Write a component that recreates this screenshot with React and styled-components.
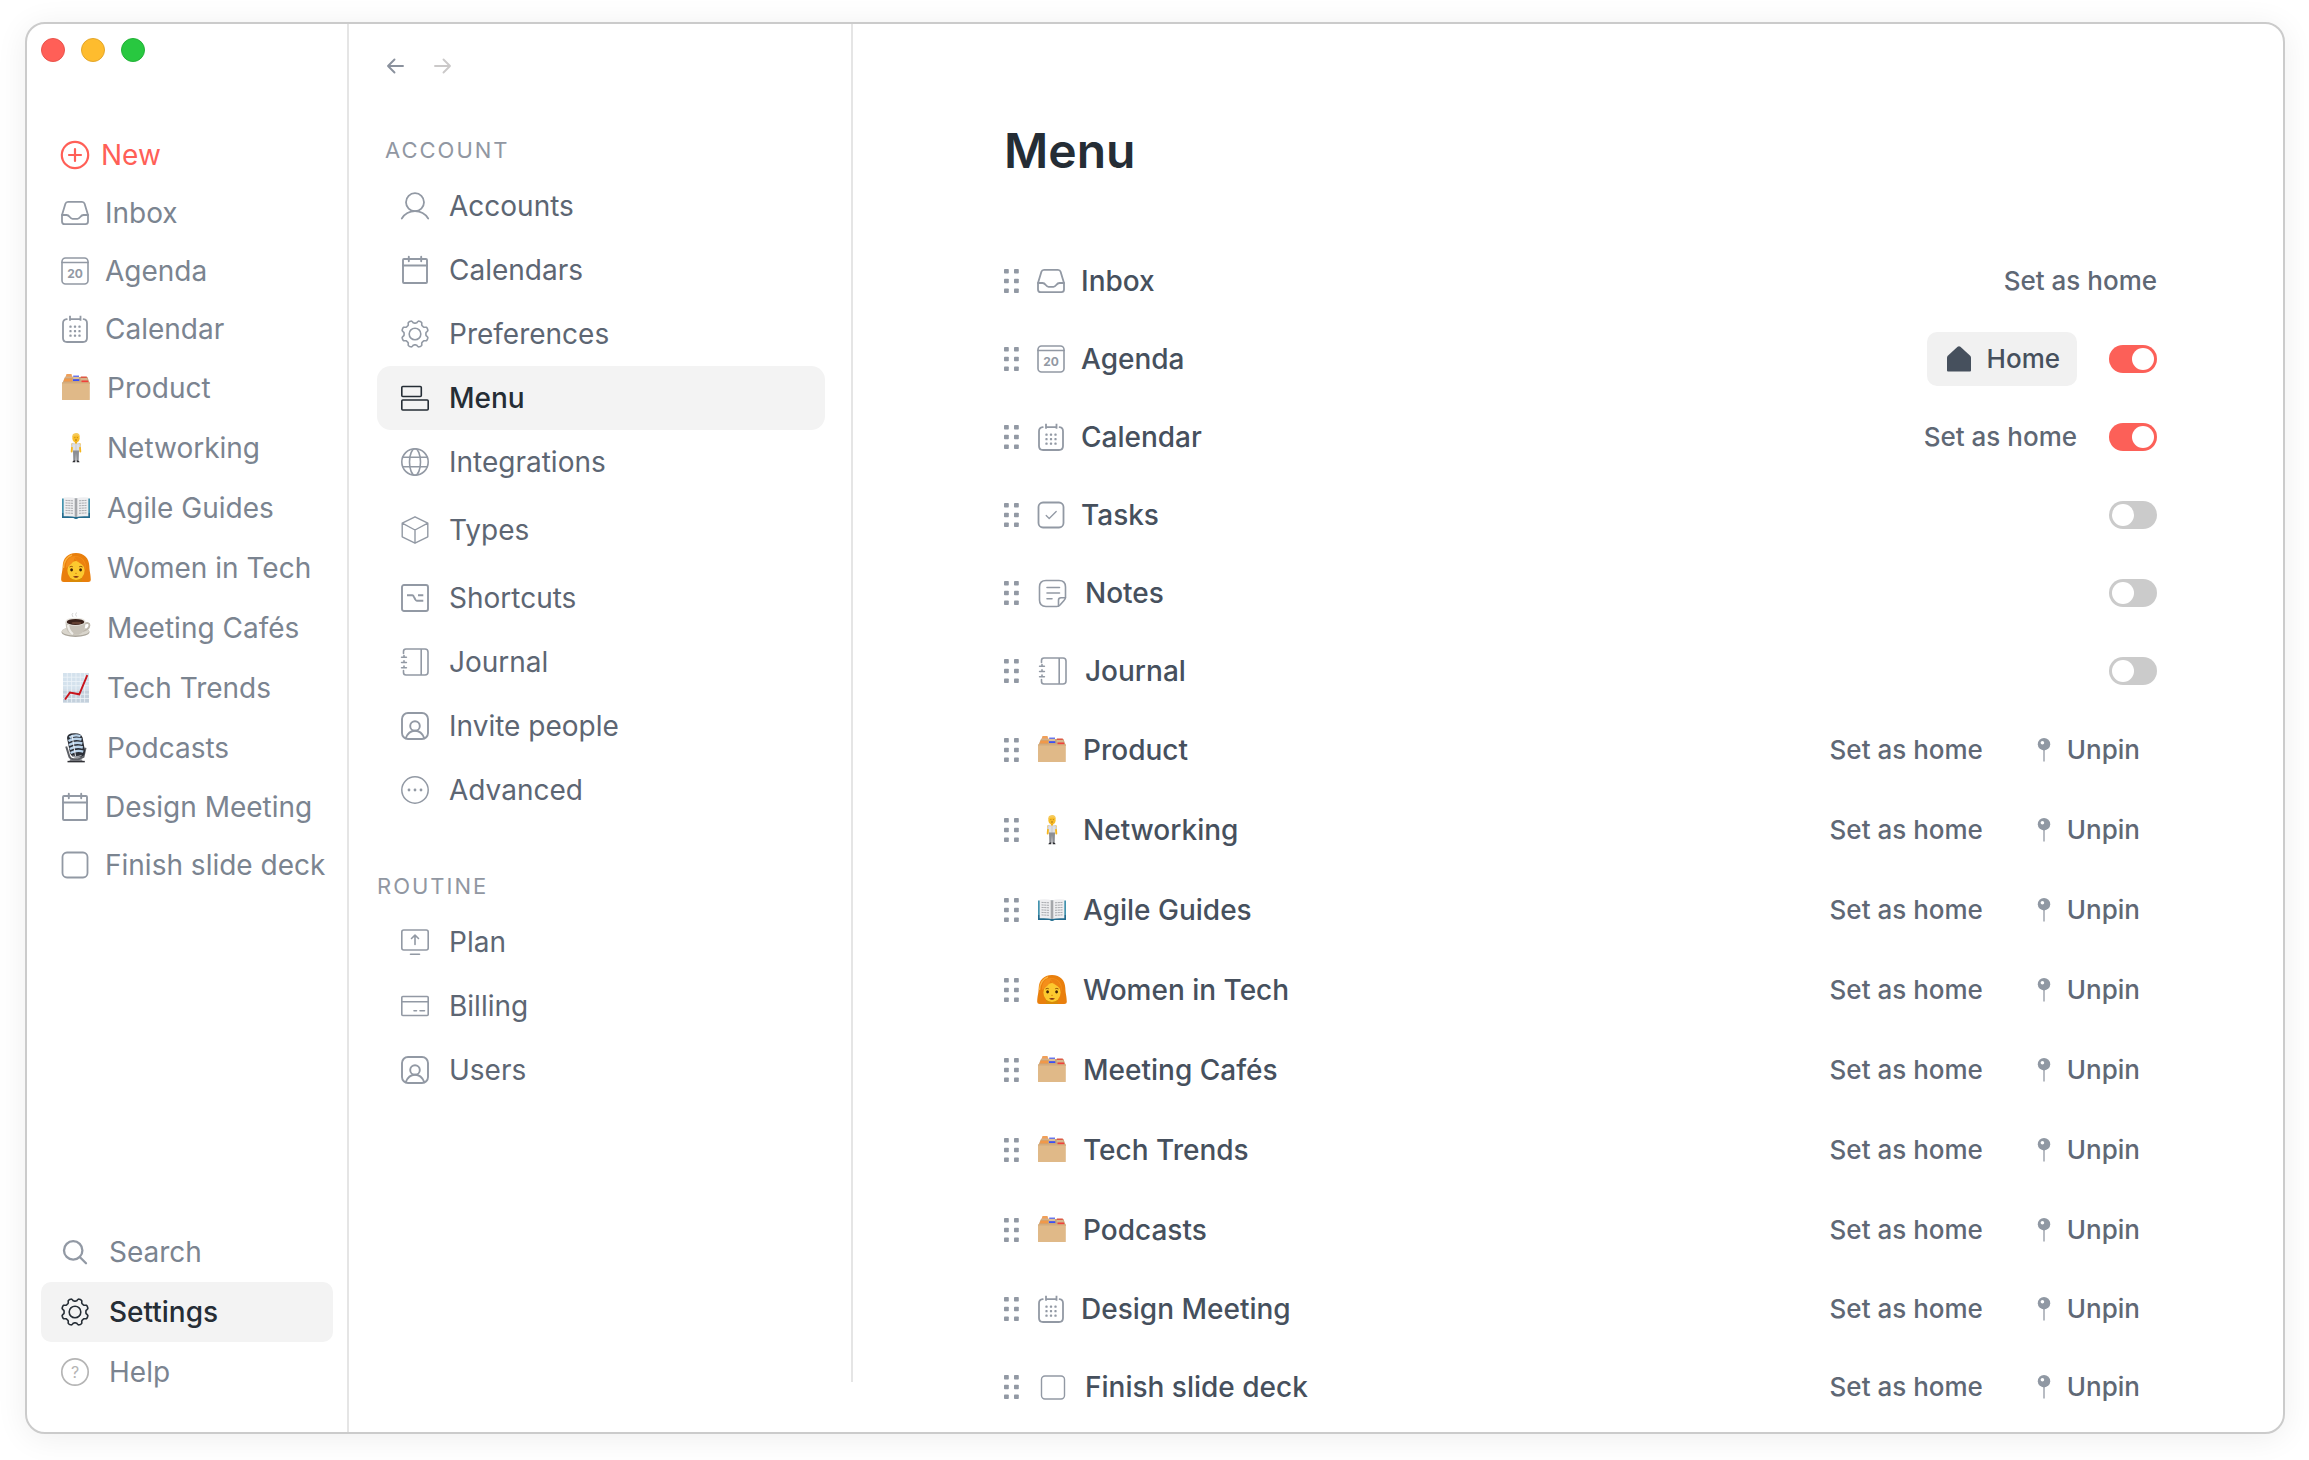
import React, { useState } from 'react';
import styled, { createGlobalStyle } from 'styled-components'

const GlobalStyle = createGlobalStyle`
  * {
    box-sizing: border-box;
  }

  body {
    margin: 0;
    background: #fff;
    font-family: Inter, "Liberation Sans", sans-serif;
    font-size: 28px;
  }

  a {
    color: inherit;
    text-decoration: none;
  }

  button {
    padding: 0;
    border: 0;
    background: none;
    color: inherit;
    font: inherit;
    cursor: pointer;
  }

  ul {
    margin: 0;
    padding: 0;
    list-style: none;
  }

  svg {
    display: block;
    flex-shrink: 0;
    overflow: visible;
  }
`

/* line icons, all on a 28 grid */

const Line = ({ weight = 1.8, children }) => (
  <svg width="28" height="28" viewBox="0 0 28 28" fill="none" stroke="currentColor" strokeWidth={weight} strokeLinecap="round" strokeLinejoin="round" aria-hidden="true">
    {children}
  </svg>
)

const gearPoints = Array.from({ length: 128 }, (_, i) => {
  const angle = (i / 128) * Math.PI * 2
  const wave = Math.tanh(2.4 * Math.cos(8 * (angle - Math.PI / 8)))
  const r = 12.2 + 1.3 * wave
  return `${(14 + r * Math.cos(angle)).toFixed(2)},${(14 + r * Math.sin(angle)).toFixed(2)}`
}).join(' ')

const NewIcon = () => (
  <Line weight={2.2}>
    <circle cx="14" cy="14" r="13.2" />
    <path d="M14 8v12M8 14h12" />
  </Line>
)

const InboxIcon = () => (
  <Line>
    <path d="M1 16 4.4 4.8Q5 2.8 7 2.8h14q2 0 2.6 2L27 16v6.6q0 2.6-2.6 2.6H3.6Q1 25.2 1 22.6Z" />
    <path d="M1 16h4.5c3.5 0 3 3.8 6 3.8h5c3 0 2.5-3.8 6-3.8H27" />
  </Line>
)

const AgendaIcon = () => (
  <Line weight={1.6}>
    <rect x="1" y="1" width="26" height="26" rx="3.5" />
    <path d="M1 5.5h26" />
    <text x="14" y="20.5" textAnchor="middle" fontSize="12" fontWeight="700" fill="currentColor" stroke="none">20</text>
  </Line>
)

const CalendarIcon = () => (
  <Line>
    <path d="M9 .8v5M19.5.8v5M9 4.2h10.5" strokeLinecap="butt" />
    <path d="M5.8 4.2Q2 4.6 2 8.2V23q0 4 4 4h16q4 0 4-4V8.2q0-3.6-3.4-4" />
    {[9.5, 14, 18.5].map(x => [11.7, 16.2, 20.7].map(y => (
      <rect key={`${x}-${y}`} x={x - 1.1} y={y - 1.1} width="2.2" height="2.2" rx=".6" fill="currentColor" stroke="none" />
    )))}
  </Line>
)

const DayIcon = () => (
  <Line weight={1.9}>
    <rect x="2" y="3" width="24" height="24" rx="1" />
    <path d="M2 9.5h24M7.8.8v4.5M20.2.8v4.5" />
  </Line>
)

const BoxIcon = () => (
  <Line>
    <rect x="1.5" y="1.5" width="25" height="25" rx="4.5" />
  </Line>
)

const SmallBoxIcon = () => (
  <Line weight={1.4}>
    <rect x="2.5" y="3" width="23" height="23" rx="3.5" />
  </Line>
)

const TaskIcon = () => (
  <Line>
    <rect x="1.5" y="1.5" width="25" height="25" rx="4.5" />
    <path d="m9.2 14.5 3 3 7-7" strokeWidth="1.3" />
  </Line>
)

const NotesIcon = () => (
  <Line weight={1.6}>
    <path d="M26.5 18V8q0-6.5-6.5-6.5H7Q.5 1.5.5 8v13q0 6.5 6.5 6.5H18q1.5 0 3-1.5l4-4.5q1.5-1.5 1.5-3.5Z" />
    <path d="M26.5 18.8H22q-2.5 0-2.5 2.5v6M8 8.5h12.5M8 14h12.5M8 19.8h5" />
  </Line>
)

const JournalIcon = () => (
  <Line weight={1.6}>
    <path d="M2.5 5.5V3.5Q2.5 1 5 1h19q3 0 3 3v20q0 3-3 3H5q-2.5 0-2.5-2.5v-2M20.2 1v26" />
    <path d="M.6 9.2h4.8M.6 14.5h4.8M.6 19.8h4.8M3 7.5v1.7M3 12.8v1.7M3 18.1v1.7" />
  </Line>
)

const PersonIcon = () => (
  <Line>
    <circle cx="14" cy="10.2" r="9" />
    <path d="M.8 26.5C4 21.5 9 19.2 14 19.2s10 2.3 13.2 7.3" />
  </Line>
)

const GearIcon = () => (
  <Line weight={1.6}>
    <polygon points={gearPoints} />
    <circle cx="14" cy="14" r="5.8" />
  </Line>
)

const MenuIcon = () => (
  <Line weight={1.6}>
    <rect x=".8" y="2.5" width="19.5" height="10" rx="1" />
    <rect x=".8" y="16" width="26.4" height="10" rx="1" />
  </Line>
)

const GlobeIcon = () => (
  <Line weight={1.6}>
    <circle cx="14" cy="14" r="13.2" />
    <ellipse cx="14" cy="14" rx="5.5" ry="13.2" />
    <path d="M1.8 9.2h24.4M1.8 18.8h24.4" />
  </Line>
)

const TypesIcon = () => (
  <Line weight={1.4}>
    <path d="m14 .8 12.8 6.4v13.6L14 27.2 1.2 20.8V7.2ZM1.2 7.2 14 14l12.8-6.8M14 14v13.2" />
  </Line>
)

const ShortcutIcon = () => (
  <Line weight={1.9}>
    <rect x="1" y="1" width="26" height="26" rx="2" />
    <path d="M6 11.3h5.3q1 0 1.4 1l1.6 3.2q.5 1.2 1.5 1.2h6.5M17 11.3h5.3" strokeLinecap="butt" />
  </Line>
)

const UserIcon = () => (
  <Line weight={1.9}>
    <rect x="1" y="1" width="26" height="26" rx="6" />
    <circle cx="14" cy="14" r="4.8" />
    <path d="M4.8 26.2Q7.5 18.8 14 18.8t9.2 7.4" />
  </Line>
)

const MoreIcon = () => (
  <Line weight={1.5}>
    <circle cx="14" cy="14" r="13.2" />
    <g fill="currentColor" stroke="none">
      <circle cx="8" cy="14" r="1.4" />
      <circle cx="14" cy="14" r="1.4" />
      <circle cx="20" cy="14" r="1.4" />
    </g>
  </Line>
)

const PlanIcon = () => (
  <Line weight={1.6}>
    <rect x=".8" y="2" width="26.4" height="20" rx="2" />
    <path d="M9.5 26.2h9M14 16.5V7.5M10.5 10.5 14 7.2l3.5 3.3" />
  </Line>
)

const BillingIcon = () => (
  <Line weight={1.6}>
    <rect x=".8" y="4.5" width="26.4" height="19" rx="1" />
    <path d="M1 9.7h26M13 18.7h2.5M19 18.7h4.5" />
  </Line>
)

const SearchIcon = () => (
  <Line weight={2.3}>
    <circle cx="12.2" cy="12.4" r="9.2" />
    <path d="m19 19.2 6 6" />
  </Line>
)

const HelpIcon = () => (
  <Line weight={1.7}>
    <circle cx="14" cy="14" r="13.2" stroke="#b5b5b5" />
    <text x="14" y="19.8" textAnchor="middle" fontSize="16" fill="#b5b5b5" stroke="none">?</text>
  </Line>
)

const ArrowIcon = ({ flip }) => (
  <svg width="16" height="16" viewBox="0 0 16 16" fill="none" stroke="currentColor" strokeWidth="1.9" strokeLinecap="round" strokeLinejoin="round" aria-hidden="true">
    <path d={flip ? 'M0 8h15M8.5 1.5 15 8l-6.5 6.5' : 'M16 8H1M7.5 1.5 1 8l6.5 6.5'} />
  </svg>
)

const GripIcon = () => (
  <svg width="15" height="24" viewBox="0 0 15 24" fill="#9299a4" aria-hidden="true">
    {[0, 9.7, 19.4].map(y => (
      <React.Fragment key={y}>
        <rect y={y} width="4.8" height="4.6" rx=".8" />
        <rect x="10" y={y} width="4.8" height="4.6" rx=".8" />
      </React.Fragment>
    ))}
  </svg>
)

const HomeIcon = () => (
  <svg width="24" height="26" viewBox="0 0 24 26" fill="#46505d" aria-hidden="true">
    <path d="M10.6.8q1.4-1.2 2.8 0l9.8 9q.8.8.8 2V24.5q0 1-1 1H1q-1 0-1-1V11.8q0-1.2.8-2Z" />
  </svg>
)

const PinIcon = () => (
  <svg width="14" height="24" viewBox="0 0 14 24" aria-hidden="true">
    <path d="M7 11v12.5" stroke="#a0a6af" strokeWidth="1.5" />
    <circle cx="7" cy="6.2" r="6.2" fill="#9098a3" />
    <circle cx="5.4" cy="4.8" r="1.8" fill="#fff" />
  </svg>
)

/* pictograms, all on a 30 grid */

const Picture = ({ children }) => (
  <svg width="30" height="30" viewBox="0 0 30 30" aria-hidden="true">{children}</svg>
)

const Folder = () => (
  <Picture>
    <path d="M4 4h22.5L29 11H1Z" fill="#c9a57c" />
    <path d="M5.5 1h5l.8 3H4.6Z" fill="#f0a05a" />
    <path d="M4.6 3.5h7l.6 1.5H3.8Z" fill="#d5b088" />
    <path d="M3.5 5.5H11v3H2.6Z" fill="#f0994a" />
    <rect x="12.2" y="2.6" width="5.8" height="1.3" fill="#4a5cf0" />
    <rect x="12.2" y="3.9" width="5.8" height="2.4" fill="#dcbf9a" />
    <rect x="12" y="6.2" width="6.3" height="1.8" fill="#3b50f5" />
    <rect x="19.8" y="3.5" width="6" height="1.4" fill="#e0503f" />
    <path d="M19.8 5h6l.8 2.6h-6.8Z" fill="#d7b48d" />
    <path d="M20.5 7.6h6.4l.6 2h-7Z" fill="#f2403a" />
    <path d="M1 9.6h27.8v16.9q0 .6-.6.6H1.6q-.6 0-.6-.6Z" fill="#e0b988" />
    <path d="M1 9.6h27.8v.8H1Z" fill="#cfa678" />
  </Picture>
)

const Man = () => (
  <Picture>
    <ellipse cx="15" cy="5.2" rx="3.6" ry="4" fill="#f9bd27" />
    <path d="M11.3 5Q10.6.2 15 0q4.4 0 3.7 5l-1-2.4-4.7.1Z" fill="#f5c95a" />
    <path d="M13.5 4.6h.8M15.9 4.6h.8M14 7h2" stroke="#75480a" strokeWidth=".6" />
    <path d="M13.8 8.5h2.4v2.3h-2.4Z" fill="#efae18" />
    <path d="M11.3 11l-.6 7.5M18.7 11l.6 7.5" stroke="#f5b61f" strokeWidth="1.9" strokeLinecap="round" />
    <path d="M12.5 9.7 15 11l2.5-1.3q2 .3 2.4 4l-1.8.6-.2 3.7h-5.8l-.2-3.7-1.8-.6q.4-3.7 2.4-4Z" fill="#d4d5da" />
    <path d="M13 11.5v6.2M17 11.5v6.2" stroke="#eeeff2" strokeWidth=".9" />
    <path d="M12 17.5h6l-.3 10h-2.3L15 20l-.4 7.5h-2.3Z" fill="#8d8f94" />
    <path d="M11.4 29.3q0-1.9 2.9-2.3v2.3ZM18.6 29.3q0-1.9-2.9-2.3v2.3Z" fill="#2d2e33" />
  </Picture>
)

const Book = () => (
  <Picture>
    <path d="M1 5.5h28V25H17.5L15 26l-2.5-1H1Z" fill="#4393ae" />
    <path d="M1 20h28v5H17.5L15 26l-2.5-1H1Z" fill="#246b8e" />
    <path d="M2.7 4.5Q10 3.8 14.8 5.2V24Q10 22.8 2.7 23.3ZM27.3 4.5Q20 3.8 15.2 5.2V24q4.8-1.2 12.1-.7Z" fill="#eeeef0" />
    <path d="M13.7 5v18.7l1.3.4 1.3-.4V5L15 5.5Z" fill="#a4a6aa" />
    {[7.4, 9.9, 12.4, 14.9, 17.4, 19.9].map(y => (
      <path key={y} d={`M4.5 ${y}l7.5.4M18 ${y + 0.4}l7.5-.4`} stroke="#9fa1a6" strokeWidth=".9" strokeDasharray="2.2 .5" />
    ))}
  </Picture>
)

const Woman = () => (
  <Picture>
    <path d="M15 0C6.5 0 2 5.5 1.7 13 1.5 19 .2 21 .2 27q0 2 2.5 2h24.6q2.5 0 2.5-2c0-6-1.3-8-1.5-14C28 5.5 23.5 0 15 0Z" fill="#e97f0c" />
    <path d="M9 24h12v5H9Z" fill="#d98a07" />
    <ellipse cx="15" cy="17.5" rx="8.6" ry="9.6" fill="#fcc92f" />
    <path d="M13.5 5.2C12.5 10 8.5 12.5 5 15c-.5-7 3-11.5 9-12 7 0 11.5 5 11 13.5-2-5.5-8-6-11.5-11.3Z" fill="#f48f1a" />
    <path d="M13.5 4C16 9 22 10 25 16.5 24 7 19 3 13.5 4Z" fill="#ec8210" />
    <path d="M2.5 15Q3 5 11 2" fill="none" stroke="#fbb03e" strokeWidth="1.4" />
    <path d="M8.5 14q1.7-1.2 3.3-.2M18.2 13.8q1.7-1 3.3.2" fill="none" stroke="#8a4a08" strokeWidth=".9" />
    <ellipse cx="10.6" cy="16.8" rx="1.4" ry="1.6" fill="#412208" />
    <ellipse cx="19.6" cy="16.8" rx="1.4" ry="1.6" fill="#412208" />
    <path d="M14 20.2q1 .6 2 0" fill="none" stroke="#dd8b12" strokeWidth=".9" />
    <path d="M12 23.6q3-1 6 0-3 2.4-6 0Z" fill="#7d2d10" />
  </Picture>
)

const Coffee = () => (
  <Picture>
    <path d="M12 4q-2-2.5 0-4M15.5 3.5q-1.8-2 0-4" fill="none" stroke="#d5d5d5" strokeWidth="1" />
    <ellipse cx="14.5" cy="19" rx="14" ry="5" fill="#aaa59b" />
    <ellipse cx="14.5" cy="18.2" rx="13.5" ry="4.4" fill="#d9d5cc" />
    <path d="M22.5 11q6-2.5 6 1.2-.4 4.6-7 6" fill="none" stroke="#bdb7ac" strokeWidth="1.8" />
    <path d="M4.5 9q0 11 7 12.8h6Q24.5 20 24.5 9Z" fill="#c8c3b9" />
    <path d="M7 12q1 6.5 5 9.2" fill="none" stroke="#efede8" strokeWidth="2.2" />
    <ellipse cx="14.5" cy="8.7" rx="10.2" ry="4" fill="#e8e5df" />
    <ellipse cx="14.5" cy="8.9" rx="8.8" ry="3" fill="#39211a" />
    <ellipse cx="15.5" cy="10" rx="5" ry="1.2" fill="#634032" />
  </Picture>
)

const Chart = () => (
  <Picture>
    <rect x="2" y="0" width="26" height="29.5" fill="#d4e2ed" />
    <path d="M2 16h26v13.5H2Z" fill="#c3d0dc" />
    <path d="M6.3 0v29.5M10.6 0v29.5M15 0v29.5M19.3 0v29.5M23.6 0v29.5M2 4.2h26M2 8.5h26M2 12.7h26M2 17h26M2 21.2h26M2 25.5h26" stroke="#edf4f9" strokeWidth=".8" />
    <path d="M4 26.5 9 19.5l9.3 1.8L26.3 2.2" fill="none" stroke="#c8141c" strokeWidth="1.9" />
  </Picture>
)

const Mic = () => (
  <Picture>
    <path d="M9 26.5q6-1.5 12 0l.8 2.6H8.2Z" fill="#85878c" />
    <path d="M6.5 28.6h17.3" stroke="#303136" strokeWidth="1.5" />
    <path d="M5.2 13.5 8.5 24q1 2 4 2.2h5l5-2.4 2-9" fill="none" stroke="#5d6066" strokeWidth="2" />
    <path d="M6 5Q6 .4 13 .2q7-.5 8.6 4.2L24 18q0 6-6.5 6.5-6.8.5-8.5-4.5Z" fill="#2b2f37" />
    <path d="M8.5 4.5q5-3.4 11-1.3M7.5 8q6-3.6 13-1.5M8 12q6.500-3.5 13.300-1.5M8.8 16q6.500-3.4 13-1.5M9.6 20q6-3.3 12.7-1.4" fill="none" stroke="#b9d2e9" strokeWidth="2.4" />
    <path d="m11 2 3.6 21.5" stroke="#f0f5fa" strokeWidth=".9" />
    <path d="M11.5 23q4 1.6 9-.6" fill="none" stroke="#999ca3" strokeWidth="1.5" />
  </Picture>
)

/* window */

const Window = styled.div`
  display: grid;
  grid-template-columns: 322px 504px 1fr;
  min-height: calc(100vh - 48px);
  margin: 22px 24px 26px 25px;
  overflow: hidden;
  border: 2px solid #cbcbcb;
  border-radius: 20px;
  background: #fff;
  box-shadow: 0 4px 32px rgba(0, 0, 0, 0.07);
`

const Sidebar = styled.div`
  display: flex;
  flex-direction: column;
  padding: 14px 14px 30px;
  border-right: 2px solid #e5e5e5;
  color: #7b8490;
`

const TrafficLights = styled.div`
  display: flex;
  gap: 16px;
`

const Light = styled.button`
  width: 24px;
  height: 24px;
  border: 1px solid ${props => props.$edge};
  border-radius: 50%;
  background: ${props => props.$color};
`

const SideNav = styled.nav`
  margin-top: 64px;
`

const BottomNav = styled.nav`
  margin-top: auto;
`

const SideLink = styled.a`
  display: flex;
  align-items: center;
  gap: ${props => props.$gap || 16}px;
  height: ${props => props.$tall ? 60 : 58}px;
  padding-left: 20px;
  border-radius: 10px;
  background: ${props => props.$active ? '#f3f3f3' : 'none'};
  color: ${props => props.$active ? '#252d35' : props.$accent ? '#ff5f57' : 'inherit'};
  font-weight: ${props => props.$active ? 500 : 400};
  white-space: nowrap;

  svg {
    color: ${props => props.$active || props.$accent ? 'inherit' : '#9299a4'};
  }
`

const Panel = styled.div`
  margin-bottom: 50px;
  padding: 34px 26px 0 28px;
  border-right: 2px solid #e5e5e5;
`

const History = styled.div`
  display: flex;
  gap: 32px;
  padding-left: 10px;
`

const HistoryButton = styled.button`
  color: #8a919d;

  &:disabled {
    color: #cbc9c9;
  }
`

const SectionTitle = styled.h2`
  margin: ${props => props.$offset}px 0 0;
  padding-left: ${props => props.$indent}px;
  color: #9197a2;
  font-size: 22px;
  font-weight: 400;
  letter-spacing: 2px;
  line-height: 28px;
`

const PanelNav = styled.nav`
  padding-top: 10px;
`

const PanelLink = styled.a`
  display: flex;
  align-items: center;
  gap: 20px;
  height: ${props => props.$tall ? 72 : 64}px;
  padding-left: 24px;
  border-radius: 14px;
  background: ${props => props.$active ? '#f3f3f3' : 'none'};
  color: ${props => props.$active ? '#252d35' : '#5d6673'};
  font-weight: ${props => props.$active ? 500 : 400};

  svg {
    color: ${props => props.$active ? 'inherit' : '#9299a4'};
  }
`

const Main = styled.main`
  padding: 96px 126px 0 151px;
`

const Title = styled.h1`
  margin: 0 0 60px;
  color: #252d35;
  font-size: 48px;
  font-weight: 600;
  line-height: 62px;
`

const Row = styled.li`
  display: flex;
  align-items: center;
  height: ${props => props.$tall ? 80 : 78}px;
  color: #46505d;
  font-weight: 500;
`

const Grip = styled.button`
  margin-right: 18px;
  cursor: grab;
`

const RowIcon = styled.span`
  display: flex;
  justify-content: center;
  width: ${props => props.$width}px;
  margin-right: 16px;
  color: #9299a4;
`

const Actions = styled.div`
  display: flex;
  align-items: center;
  gap: 32px;
  margin-left: auto;
  color: #5f6875;
  font-size: 26px;
  line-height: 30px;
`

const HomeButton = styled.button`
  display: flex;
  align-items: center;
  gap: 16px;
  height: 54px;
  padding: 0 17px 0 20px;
  border-radius: 10px;
  background: #f1f1f1;
  color: #46505d;
`

const UnpinButton = styled.button`
  display: flex;
  align-items: center;
  gap: 16px;
  padding: 0 17px 0 22px;
`

const Toggle = styled.input.attrs({ type: 'checkbox', role: 'switch' })`
  display: flex;
  width: 48px;
  height: 28px;
  margin: 0;
  padding: 3px;
  appearance: none;
  border-radius: 14px;
  background: #cbcbcb;
  cursor: pointer;

  &::before {
    content: "";
    width: 22px;
    height: 22px;
    border-radius: 50%;
    background: #fff;
  }

  &:checked {
    justify-content: flex-end;
    background: #fc6058;
  }
`

const sideItems = [
  { name: 'New', icon: NewIcon, accent: true, gap: 12 },
  { name: 'Inbox', icon: InboxIcon },
  { name: 'Agenda', icon: AgendaIcon },
  { name: 'Calendar', icon: CalendarIcon },
  { name: 'Product', icon: Folder, tall: true },
  { name: 'Networking', icon: Man, tall: true },
  { name: 'Agile Guides', icon: Book, tall: true },
  { name: 'Women in Tech', icon: Woman, tall: true },
  { name: 'Meeting Cafés', icon: Coffee, tall: true },
  { name: 'Tech Trends', icon: Chart, tall: true },
  { name: 'Podcasts', icon: Mic, tall: true },
  { name: 'Design Meeting', icon: DayIcon },
  { name: 'Finish slide deck', icon: BoxIcon }
]

const bottomItems = [
  { name: 'Search', icon: SearchIcon },
  { name: 'Settings', icon: GearIcon, active: true },
  { name: 'Help', icon: HelpIcon }
]

const accountItems = [
  { name: 'Accounts', icon: PersonIcon },
  { name: 'Calendars', icon: DayIcon },
  { name: 'Preferences', icon: GearIcon },
  { name: 'Menu', icon: MenuIcon, active: true },
  { name: 'Integrations', icon: GlobeIcon },
  { name: 'Types', icon: TypesIcon, tall: true },
  { name: 'Shortcuts', icon: ShortcutIcon },
  { name: 'Journal', icon: JournalIcon },
  { name: 'Invite people', icon: UserIcon },
  { name: 'Advanced', icon: MoreIcon }
]

const routineItems = [
  { name: 'Plan', icon: PlanIcon },
  { name: 'Billing', icon: BillingIcon },
  { name: 'Users', icon: UserIcon }
]

const menuItems = [
  { name: 'Inbox', icon: InboxIcon, canBeHome: true },
  { name: 'Agenda', icon: AgendaIcon, toggle: true, canBeHome: true },
  { name: 'Calendar', icon: CalendarIcon, toggle: true, canBeHome: true },
  { name: 'Tasks', icon: TaskIcon, toggle: true },
  { name: 'Notes', icon: NotesIcon, width: 32, toggle: true },
  { name: 'Journal', icon: JournalIcon, width: 32, toggle: true },
  { name: 'Product', icon: Folder, width: 30, tall: true, pinned: true },
  { name: 'Networking', icon: Man, width: 30, tall: true, pinned: true },
  { name: 'Agile Guides', icon: Book, width: 30, tall: true, pinned: true },
  { name: 'Women in Tech', icon: Woman, width: 30, tall: true, pinned: true },
  { name: 'Meeting Cafés', icon: Folder, width: 30, tall: true, pinned: true },
  { name: 'Tech Trends', icon: Folder, width: 30, tall: true, pinned: true },
  { name: 'Podcasts', icon: Folder, width: 30, tall: true, pinned: true },
  { name: 'Design Meeting', icon: CalendarIcon, pinned: true },
  { name: 'Finish slide deck', icon: SmallBoxIcon, width: 32, pinned: true }
]

const PanelItems = ({ items, label }) => (
  <PanelNav aria-label={label}>
    {items.map(({ name, icon: Icon, tall, active }) => (
      <PanelLink key={name} href="#" $tall={tall} $active={active}>
        <Icon />
        {name}
      </PanelLink>
    ))}
  </PanelNav>
)

const App = () => {
  const [home, setHome] = useState('Agenda')
  const [enabled, setEnabled] = useState({ Agenda: true, Calendar: true })

  const onToggle = (event) => {
    const { name, checked } = event.target
    setEnabled({ ...enabled, [name]: checked })
  }

  return (
    <>
      <GlobalStyle />
      <Window>
        <Sidebar>
          <TrafficLights>
            <Light aria-label="Close" $color="#ff5f57" $edge="#e9534b" />
            <Light aria-label="Minimize" $color="#febc2e" $edge="#e3a62b" />
            <Light aria-label="Zoom" $color="#28c840" $edge="#23b137" />
          </TrafficLights>
          <SideNav aria-label="Main">
            {sideItems.map(({ name, icon: Icon, tall, accent, gap }) => (
              <SideLink key={name} href="#" $tall={tall} $accent={accent} $gap={gap}>
                <Icon />
                {name}
              </SideLink>
            ))}
          </SideNav>
          <BottomNav aria-label="App">
            {bottomItems.map(({ name, icon: Icon, active }) => (
              <SideLink key={name} href="#" $tall $gap={20} $active={active}>
                <Icon />
                {name}
              </SideLink>
            ))}
          </BottomNav>
        </Sidebar>

        <Panel>
          <History>
            <HistoryButton aria-label="Back"><ArrowIcon /></HistoryButton>
            <HistoryButton aria-label="Forward" disabled><ArrowIcon flip /></HistoryButton>
          </History>
          <SectionTitle $offset={62} $indent={8}>ACCOUNT</SectionTitle>
          <PanelItems items={accountItems} label="Account" />
          <SectionTitle $offset={50} $indent={0}>ROUTINE</SectionTitle>
          <PanelItems items={routineItems} label="Routine" />
        </Panel>

        <Main>
          <Title>Menu</Title>
          <ul>
            {menuItems.map(({ name, icon: Icon, width = 28, tall, toggle, pinned, canBeHome }) => (
              <Row key={name} $tall={tall}>
                <Grip aria-label={`Move ${name}`}><GripIcon /></Grip>
                <RowIcon $width={width}><Icon /></RowIcon>
                {name}
                <Actions>
                  {home === name && <HomeButton><HomeIcon />Home</HomeButton>}
                  {home !== name && (canBeHome || pinned) && (
                    <button onClick={() => setHome(name)}>Set as home</button>
                  )}
                  {toggle && <Toggle name={name} aria-label={`Show ${name}`} checked={!!enabled[name]} onChange={onToggle} />}
                  {pinned && <UnpinButton><PinIcon />Unpin</UnpinButton>}
                </Actions>
              </Row>
            ))}
          </ul>
        </Main>
      </Window>
    </>
  )
}

export default App;
